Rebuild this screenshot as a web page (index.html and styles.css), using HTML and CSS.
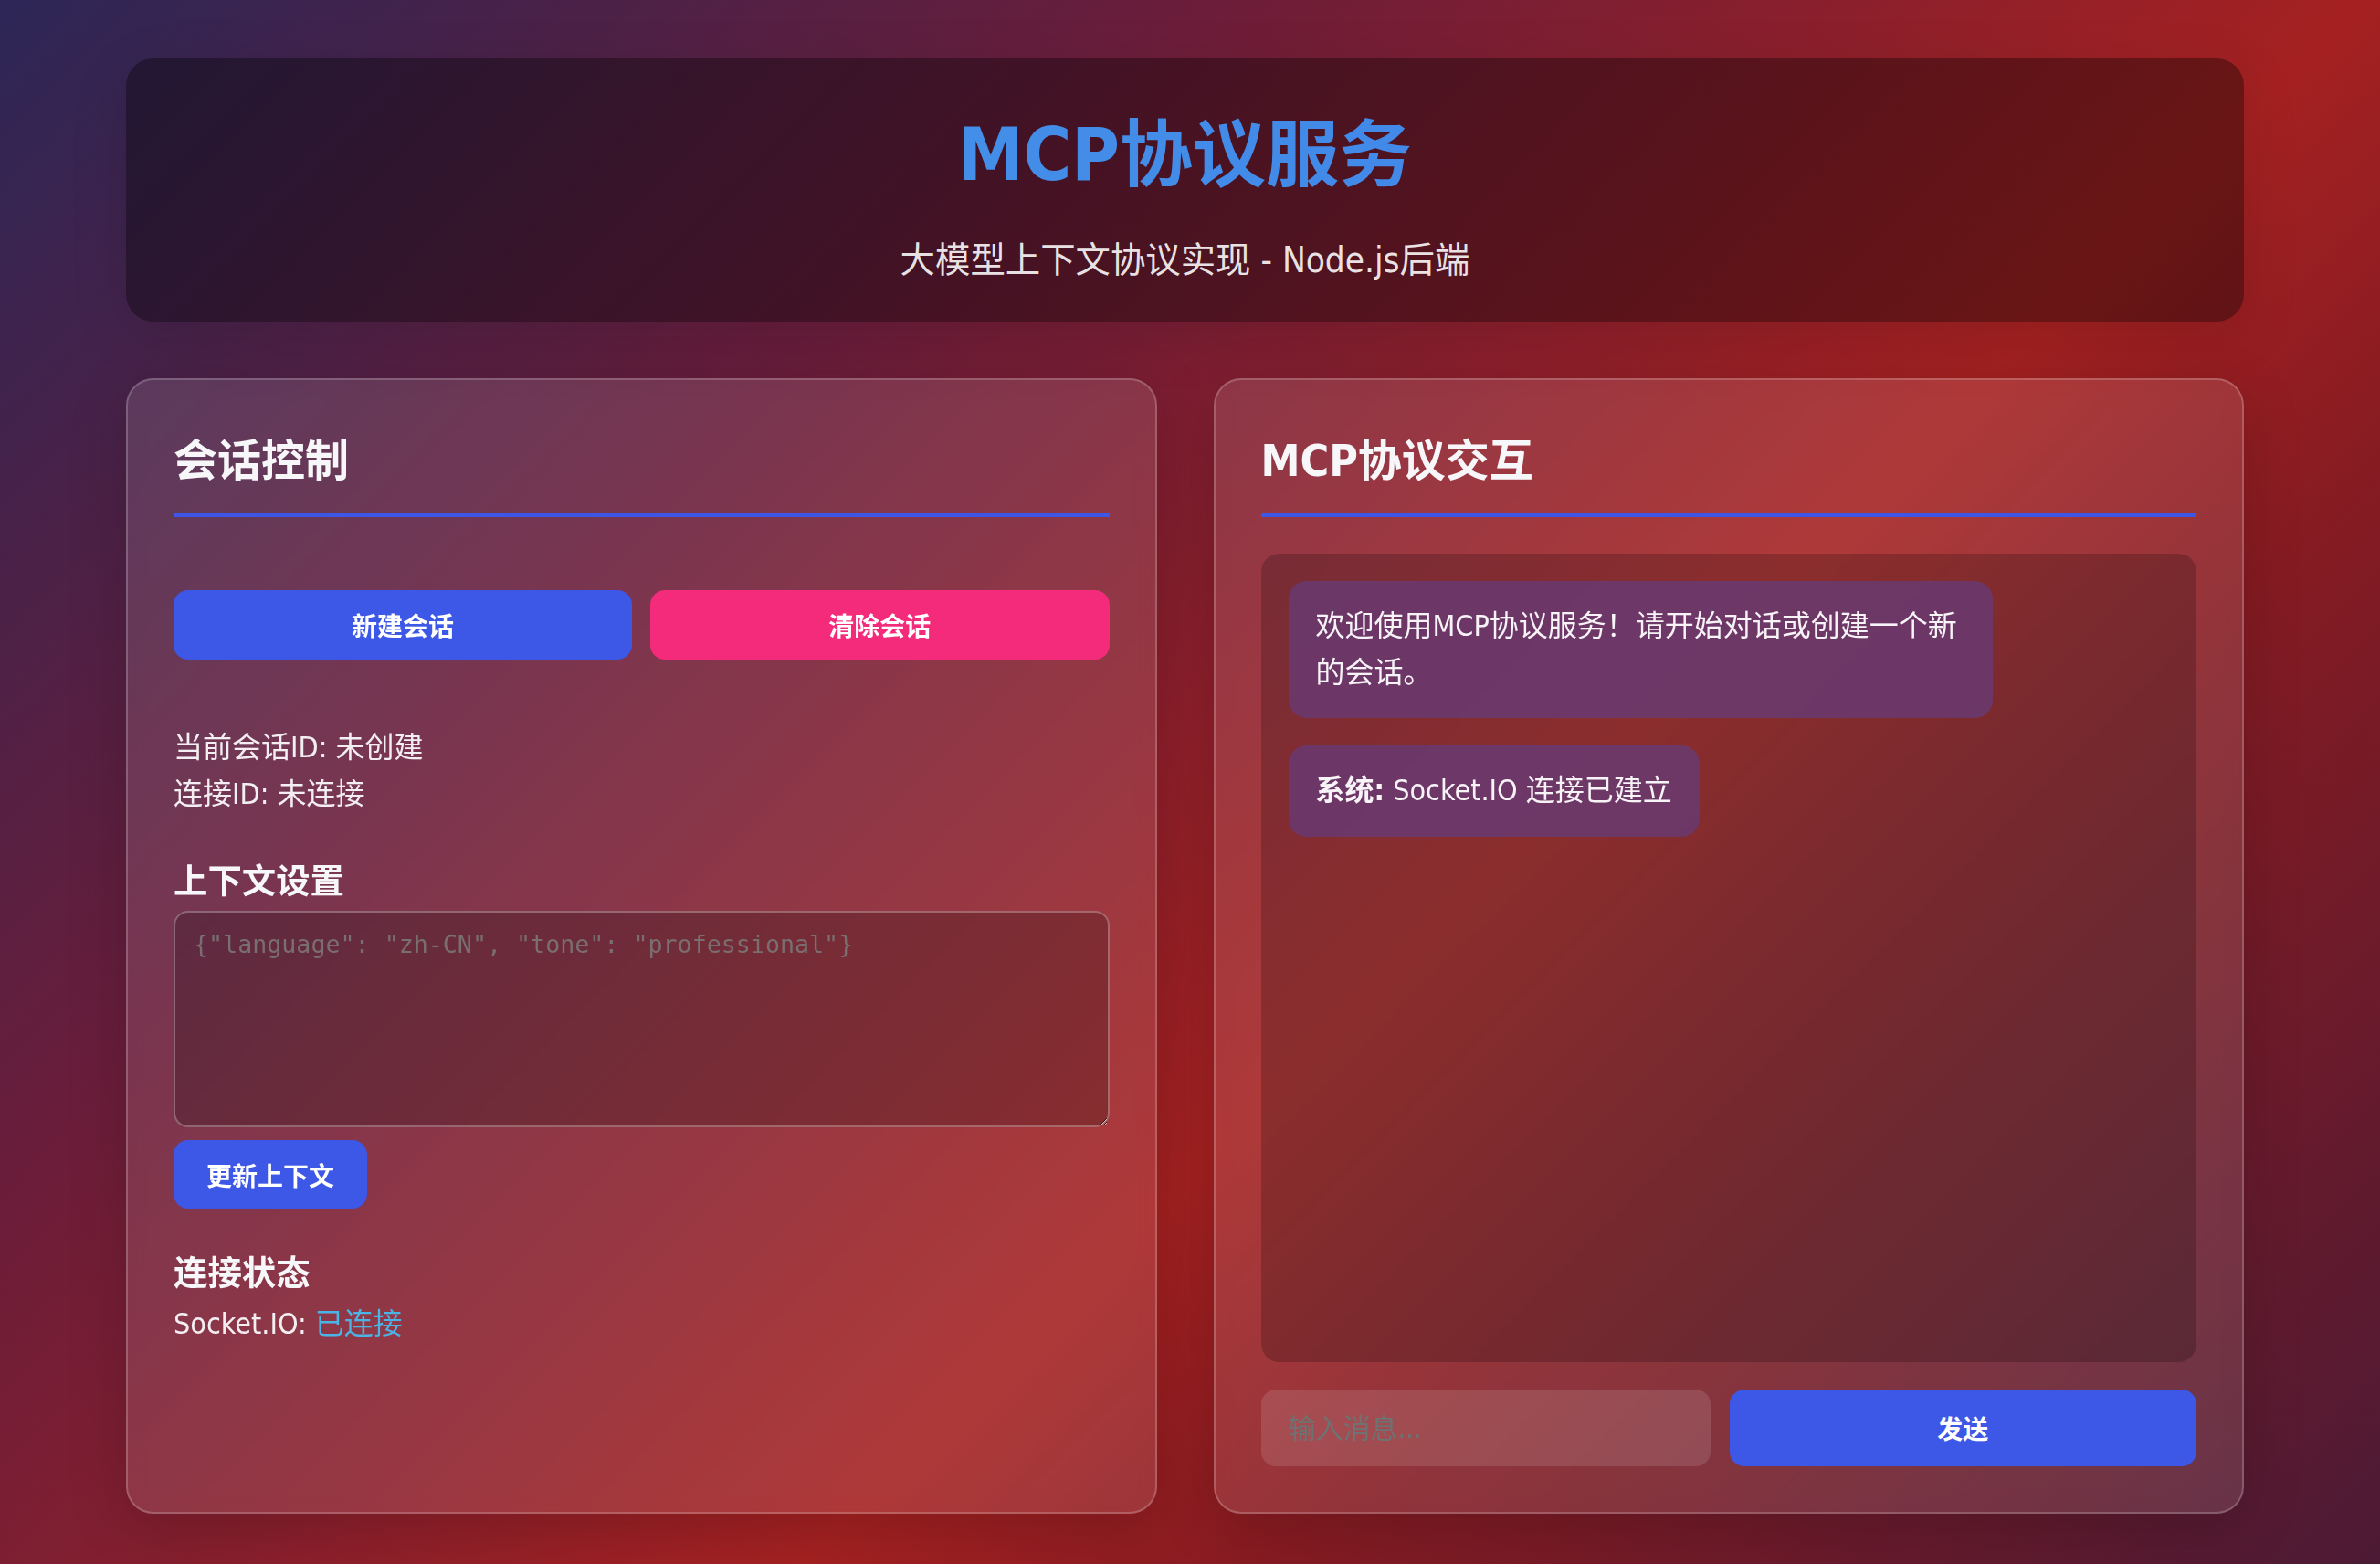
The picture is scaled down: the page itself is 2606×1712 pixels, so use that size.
FILE: index.html
```html
<!DOCTYPE html>
<html lang="zh-CN">
<head>
<meta charset="UTF-8">
<title>MCP协议服务</title>
<link rel="stylesheet" href="styles.css">
</head>
<body>
<div class="container">
  <header class="header">
    <h1 class="title">MCP协议服务</h1>
    <p class="subtitle">大模型上下文协议实现 - Node.js后端</p>
  </header>
  <main class="panels">
    <section class="panel">
      <h2 class="panel-title">会话控制</h2>
      <div class="btn-row">
        <button class="btn btn-blue">新建会话</button>
        <button class="btn btn-pink">清除会话</button>
      </div>
      <div class="info">
        <div>当前会话ID: 未创建</div>
        <div>连接ID: 未连接</div>
      </div>
      <h3 class="sub-title">上下文设置</h3>
      <textarea class="ctx-input" placeholder='{"language": "zh-CN", "tone": "professional"}'></textarea>
      <button class="btn btn-blue btn-small">更新上下文</button>
      <h3 class="sub-title sub-title-status">连接状态</h3>
      <div class="status">Socket.IO: <span class="ok">已连接</span></div>
    </section>
    <section class="panel panel-chat">
      <h2 class="panel-title">MCP协议交互</h2>
      <div class="chat">
        <div class="bubble">欢迎使用MCP协议服务！请开始对话或创建一个新的会话。</div>
        <div class="bubble"><strong>系统:</strong> Socket.IO 连接已建立</div>
      </div>
      <div class="send-row">
        <input class="msg-input" type="text" placeholder="输入消息...">
        <button class="btn btn-blue btn-send">发送</button>
      </div>
    </section>
  </main>
</div>
</body>
</html>
```
FILE: styles.css
```css
html, body {
  margin: 0;
  padding: 0;
}
body {
  min-height: 1712px;
  font-family: "DejaVu Sans Condensed", "DejaVu Sans", "Noto Sans CJK SC", sans-serif;
  font-size: 32px;
  line-height: 1.6;
  color: #f3eef2;
  background: linear-gradient(135deg, #2c2656 0%, #6a1d3a 30%, #a52121 60%, #861b22 72%, #4c1a35 100%);
  background-attachment: fixed;
}
.container {
  box-sizing: border-box;
  padding: 64px 149px 56px 138px;
}
.header {
  background: rgba(0, 0, 0, 0.36);
  border-radius: 30px;
  padding: 42px 40px 37px;
  text-align: center;
  box-shadow: 0 16px 64px rgba(0, 0, 0, 0.12);
}
.title {
  margin: 0 0 20px;
  font-size: 80px;
  line-height: 128px;
  font-weight: bold;
  background: linear-gradient(90deg, #4698e6, #3f7fea);
  -webkit-background-clip: text;
  background-clip: text;
  color: transparent;
}
.subtitle {
  margin: 0;
  font-size: 38.4px;
  line-height: 61px;
  color: rgba(255, 255, 255, 0.9);
}
.panels {
  display: grid;
  grid-template-columns: 1fr 1fr;
  gap: 62px;
  margin-top: 62px;
}
.panel {
  background: rgba(255, 255, 255, 0.11);
  border: 2px solid rgba(255, 255, 255, 0.2);
  border-radius: 30px;
  padding: 50px;
  box-shadow: 0 16px 64px rgba(0, 0, 0, 0.18);
  backdrop-filter: blur(10px);
}
.panel-title {
  margin: 0 0 40px;
  font-size: 48px;
  line-height: 77px;
  font-weight: bold;
  color: #f7f7fa;
  padding-bottom: 19px;
  border-bottom: 4px solid #3d56e6;
}
.btn {
  font-family: "DejaVu Sans Condensed", "DejaVu Sans", "Noto Sans CJK SC", sans-serif;
  font-size: 28px;
  font-weight: bold;
  color: #fff;
  border: none;
  border-radius: 16px;
  cursor: pointer;
  padding: 0;
}
.btn-blue {
  background: #3d57e6;
}
.btn-pink {
  background: #f42b7a;
}
.btn-row {
  display: grid;
  grid-template-columns: 1fr 1fr;
  gap: 20px;
  padding-top: 40px;
}
.btn-row .btn {
  height: 76px;
}
.info {
  margin-top: 71px;
}
.sub-title {
  margin: 40px 0 2px;
  font-size: 37.4px;
  line-height: 60px;
  font-weight: bold;
  color: #f7f7fa;
}
.sub-title-status {
  margin: 41px 0 0;
}
.ctx-input {
  display: block;
  box-sizing: border-box;
  width: 100%;
  height: 237px;
  padding: 20px;
  border: 2px solid rgba(255, 255, 255, 0.28);
  border-radius: 16px;
  background: rgba(0, 0, 0, 0.2);
  color: #fff;
  font-family: "DejaVu Sans Mono", monospace;
  font-size: 26.67px;
  line-height: 30px;
  resize: vertical;
}
.ctx-input::placeholder {
  color: #7a6e70;
}
.btn-small {
  display: block;
  margin-top: 14px;
  height: 75px;
  padding: 0 36px;
}
.ok {
  color: #4bb4e6;
}
.panel-chat {
  display: flex;
  flex-direction: column;
}
.chat {
  box-sizing: border-box;
  height: 885px;
  padding: 30px;
  border-radius: 20px;
  background: rgba(0, 0, 0, 0.2);
  display: flex;
  flex-direction: column;
  align-items: flex-start;
  gap: 30px;
}
.bubble {
  max-width: 80%;
  box-sizing: border-box;
  padding: 24px 30px;
  border-radius: 20px;
  background: rgba(106, 58, 112, 0.88);
  color: #f7f3f7;
  line-height: 51.2px;
}
.send-row {
  display: flex;
  gap: 21px;
  margin-top: 30px;
}
.msg-input {
  flex: 0 0 492px;
  box-sizing: border-box;
  height: 84px;
  padding: 0 30px;
  border: none;
  border-radius: 16px;
  background: rgba(255, 255, 255, 0.12);
  color: #fff;
  font-family: "DejaVu Sans Condensed", "DejaVu Sans", "Noto Sans CJK SC", sans-serif;
  font-size: 30px;
  outline: none;
}
.msg-input::placeholder {
  color: #6f7272;
}
.btn-send {
  flex: 1;
  height: 84px;
}
```
